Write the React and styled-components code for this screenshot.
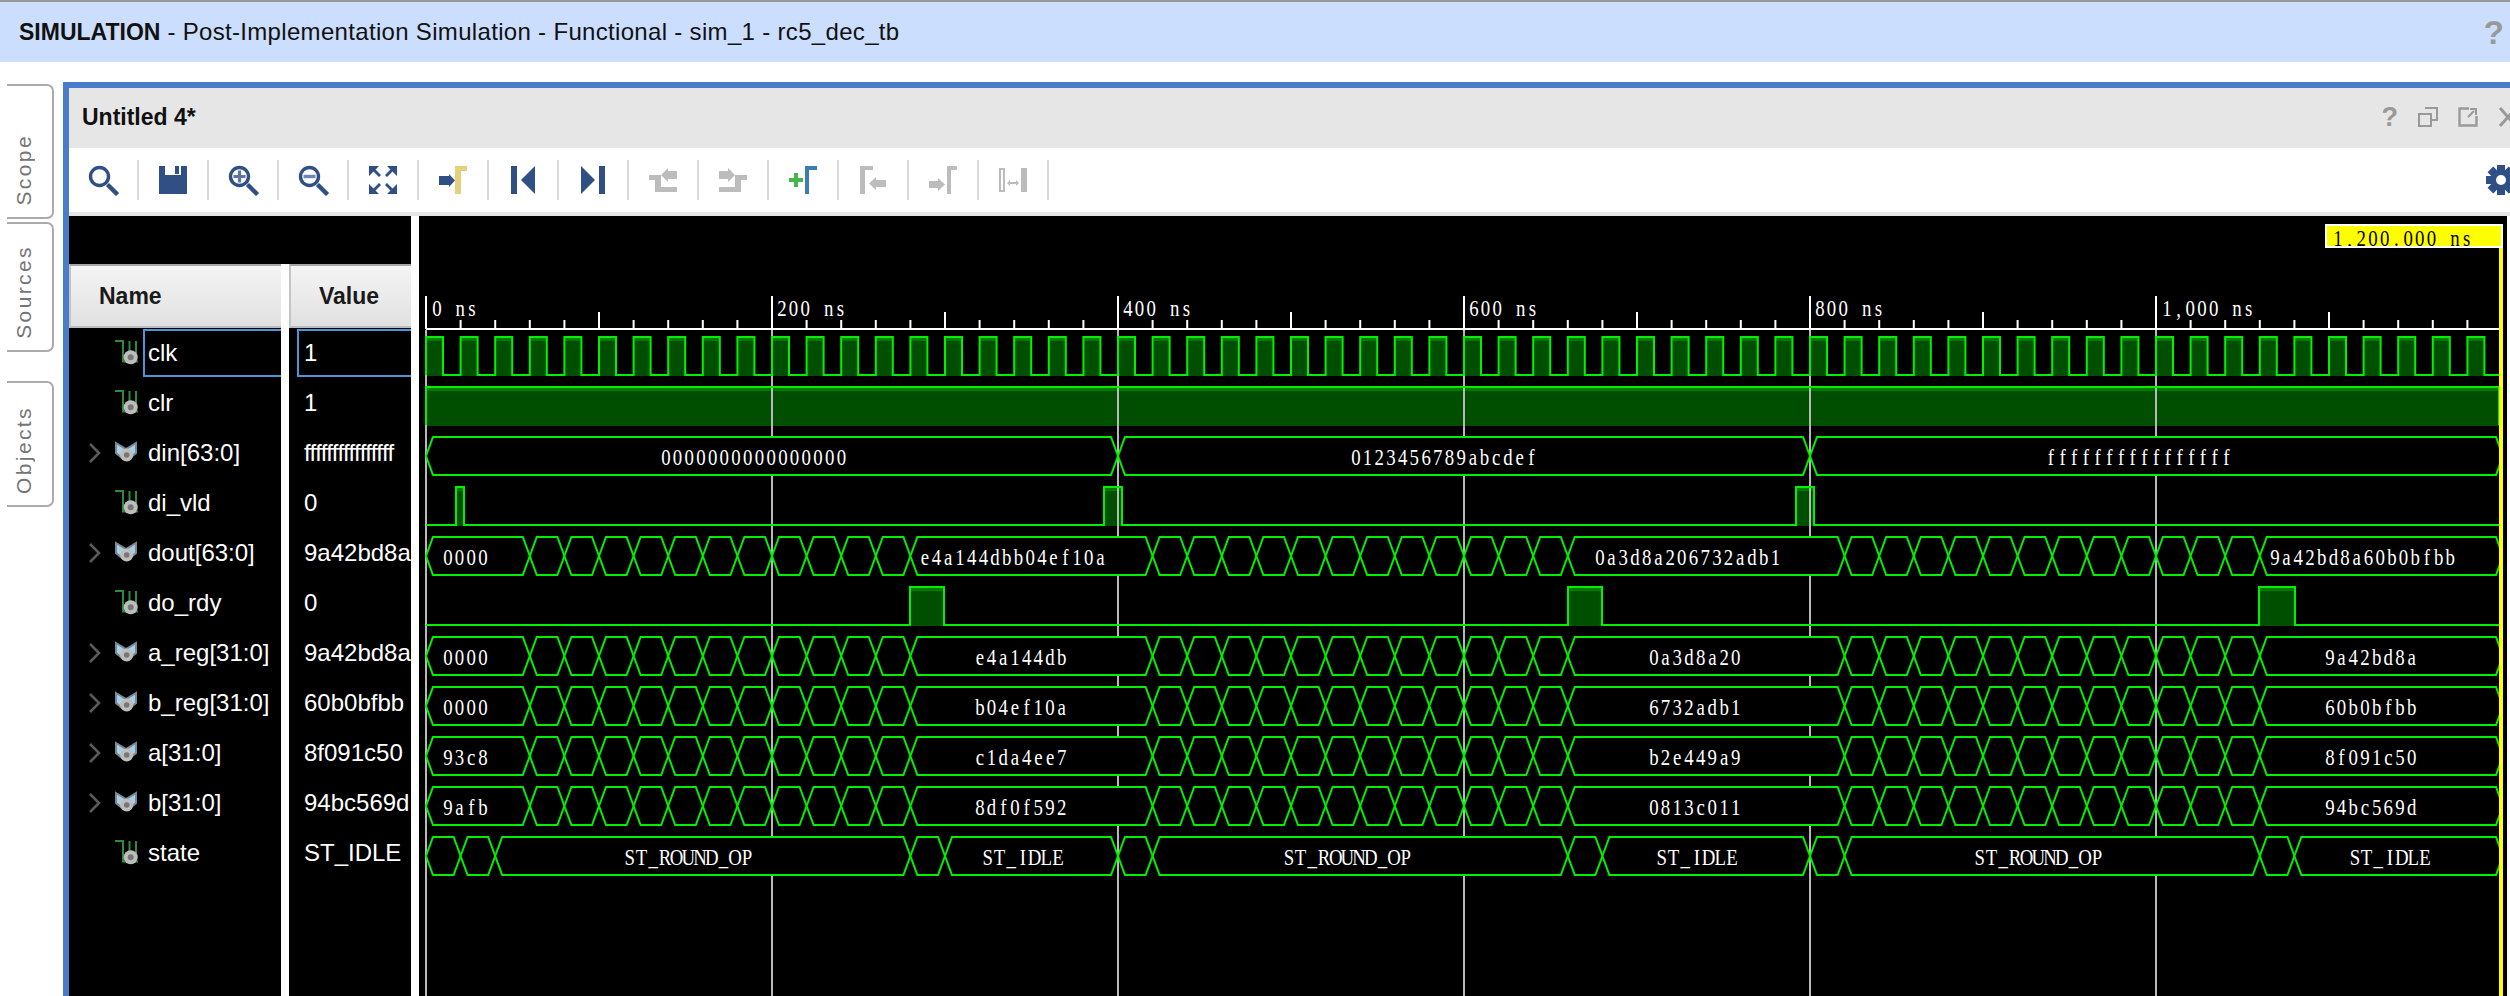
import React from "react";
import styled, { createGlobalStyle } from "styled-components";

const GlobalStyle = createGlobalStyle`
  html, body {
    margin: 0;
    padding: 0;
    height: 996px;
    overflow: hidden;
    background: #ffffff;
  }
  * { box-sizing: border-box; }
`;

const NAVY = "#2f4f85";
const OFF = "#bcbcbc";

// page coordinates of the wave canvas: 20ns = 34.6px, time zero at x=426
const X0 = 426;
const END = 2499;
const tx = (k) => X0 + 34.6 * k;
const ROW = (i) => ({ hi: 337 + 50 * i, lo: 375 + 50 * i });

const signals = [
  { name: "clk", value: "1", selected: true },
  { name: "clr", value: "1" },
  { name: "din[63:0]", value: "ffffffffffffffff", bus: true, tight: true },
  { name: "di_vld", value: "0" },
  { name: "dout[63:0]", value: "9a42bd8a", bus: true },
  { name: "do_rdy", value: "0" },
  { name: "a_reg[31:0]", value: "9a42bd8a", bus: true },
  { name: "b_reg[31:0]", value: "60b0bfbb", bus: true },
  { name: "a[31:0]", value: "8f091c50", bus: true },
  { name: "b[31:0]", value: "94bc569d", bus: true },
  { name: "state", value: "ST_IDLE" },
];

const clkPulses = Array.from({ length: 60 }, (_, k) => [tx(k), tx(k) + 17]);
const bitRows = [
  { row: 0, pulses: clkPulses },
  { row: 1, pulses: [[X0, END]] },
  { row: 3, pulses: [[456, 464], [1104, 1122], [1796, 1814]] },
  { row: 5, pulses: [[910, 944], [1568, 1602], [2259, 2295]] },
];

const range = (a, b) => Array.from({ length: b - a }, (_, i) => tx(a + i));
// edges of a register that churns between the three finished blocks
const churn = [
  X0, ...range(3, 15), ...range(21, 34), ...range(41, 54), 2503,
];
const regLabels = (t0, t1, t2, t3, first = 442) => [
  [t0, first], [t1, 974], [t2, 1648], [t3, 2324],
];

const busRows = [
  {
    row: 2,
    edges: [X0, tx(20), tx(40), 2503],
    labels: [["0000000000000000", 660], ["0123456789abcdef", 1350], ["ffffffffffffffff", 2045]],
  },
  {
    row: 4,
    edges: churn,
    labels: [["0000", 442], ["e4a144dbb04ef10a", 919], ["0a3d8a206732adb1", 1594], ["9a42bd8a60b0bfbb", 2269]],
  },
  { row: 6, edges: churn, labels: regLabels("0000", "e4a144db", "0a3d8a20", "9a42bd8a") },
  { row: 7, edges: churn, labels: regLabels("0000", "b04ef10a", "6732adb1", "60b0bfbb") },
  { row: 8, edges: churn, labels: regLabels("93c8", "c1da4ee7", "b2e449a9", "8f091c50") },
  { row: 9, edges: churn, labels: regLabels("9afb", "8df0f592", "0813c011", "94bc569d") },
  {
    row: 10,
    edges: [X0, tx(1), tx(2), tx(14), tx(15), tx(20), tx(21), tx(33), tx(34), tx(40), tx(41), tx(53), tx(54), 2503],
    labels: [
      ["ST_ROUND_OP", 624], ["ST_IDLE", 982], ["ST_ROUND_OP", 1283],
      ["ST_IDLE", 1656], ["ST_ROUND_OP", 1974], ["ST_IDLE", 2349],
    ],
  },
];

const rulerLabels = [
  ["0 ns", 431], ["200 ns", 776], ["400 ns", 1122], ["600 ns", 1468], ["800 ns", 1814], ["1,000 ns", 2161],
];

const Page = styled.div`
  width: 2510px;
  height: 996px;
  overflow: hidden;
  background: #ffffff;
  font-family: "Liberation Sans", Arial, sans-serif;
`;

const TopBar = styled.div`
  height: 62px;
  border-top: 2px solid #999999;
  background: #cbdefe;
  display: flex;
  align-items: center;
  justify-content: space-between;
  padding: 0 6px 0 19px;
  margin-bottom: 20px;
  color: #111111;
`;

const TopTitle = styled.span`
  font-size: 24px;
  letter-spacing: 0.32px;
  b {
    font-size: 23px;
    font-weight: 700;
    letter-spacing: 0;
  }
`;

const HelpGlyph = styled.span`
  color: #999999;
  font-weight: 700;
  font-size: ${(p) => p.$size}px;
  line-height: 1;
`;

const Main = styled.div`
  display: flex;
  height: 914px;
`;

const SideTabs = styled.div`
  width: 63px;
  flex: none;
  display: flex;
  flex-direction: column;
  padding: 2px 9px 0 7px;
`;

const SideTab = styled.div`
  height: ${(p) => p.$height}px;
  margin-top: ${(p) => p.$gap}px;
  border: 2px solid #ababab;
  border-left: none;
  border-radius: 0 7px 7px 0;
  display: flex;
  flex-direction: column;
  justify-content: flex-start;
  align-items: center;
  padding: 0 12px 0 0;
`;

const SideTabLabel = styled.span`
  writing-mode: vertical-rl;
  transform: rotate(180deg);
  font-size: 21px;
  letter-spacing: 2.4px;
  color: #757575;
  line-height: 21px;
  margin-top: auto;
  margin-bottom: 11px;
`;

const Panel = styled.div`
  flex: 1;
  min-width: 0;
  border-top: 6px solid #4a7cc9;
  border-left: 6px solid #4a7cc9;
  display: flex;
  flex-direction: column;
`;

const TitleBar = styled.div`
  height: 60px;
  flex: none;
  background: #e6e6e6;
  display: flex;
  align-items: center;
  justify-content: space-between;
  padding: 0 0 2px 13px;
  font-size: 23px;
  font-weight: 700;
  color: #111111;
`;

const TitleActions = styled.div`
  display: flex;
  align-items: center;
  gap: 20px;
  margin-right: -8px;
`;

const ActionIcon = styled.svg`
  width: 20px;
  height: 20px;
  flex: none;
  display: block;
`;

const Toolbar = styled.div`
  height: 68px;
  flex: none;
  background: #ffffff;
  border-bottom: 4px solid #e6e6e6;
  display: flex;
  align-items: center;
  position: relative;
`;

const ToolButton = styled.div`
  width: 70px;
  height: 40px;
  flex: none;
  border-right: 2px solid #d9d9d9;
  display: flex;
  align-items: center;
  justify-content: center;
`;

const ToolIcon = styled.svg`
  width: 40px;
  height: 32px;
  display: block;
`;

const GearIcon = styled.svg`
  width: 32px;
  height: 32px;
  flex: none;
  margin-left: auto;
  margin-right: -7px;
  display: block;
`;

const Body = styled.div`
  flex: 1;
  min-height: 0;
  display: flex;
  gap: 8px;
  padding-right: 3px;
`;

const SignalPane = styled.div`
  width: 342px;
  flex: none;
  display: grid;
  grid-template-columns: 212px 122px;
  grid-template-rows: 48px 64px 1fr;
  column-gap: 8px;
`;

const PaneTop = styled.div`
  grid-column: 1 / -1;
  background: #000000;
`;

const HeaderCell = styled.div`
  background: linear-gradient(#f4f4f4, #e1e1e1);
  border-top: 2px solid #a6a6a6;
  border-left: 2px solid #c4c4c4;
  border-bottom: 2px solid #bdbdbd;
  display: flex;
  align-items: center;
  padding-left: ${(p) => p.$inset}px;
  font-size: 23px;
  font-weight: 700;
  color: #1a1a1a;
`;

const SignalColumn = styled.div`
  background: #000000;
  overflow: hidden;
  min-width: 0;
`;

const NameRow = styled.div`
  height: 50px;
  display: flex;
  align-items: center;
  padding-left: 20px;
`;

const Expander = styled.svg`
  width: 12px;
  height: 20px;
  flex: none;
  margin-right: 13px;
  display: block;
  visibility: ${(p) => (p.$shown ? "visible" : "hidden")};
`;

const SignalIcon = styled.svg`
  width: 28px;
  height: 28px;
  flex: none;
  margin-right: 1px;
  display: block;
`;

const CellText = styled.div`
  flex: 1;
  height: 48px;
  min-width: 0;
  display: flex;
  align-items: center;
  padding-left: ${(p) => p.$inset}px;
  border: 2px solid ${(p) => (p.$selected ? "#4a96d8" : "transparent")};
  border-right: none;
  color: #ffffff;
  font-size: 24px;
  white-space: nowrap;
  overflow: hidden;
  letter-spacing: ${(p) => (p.$tight ? "-0.67px" : "0")};
`;

const ValueRow = styled.div`
  height: 50px;
  display: flex;
  align-items: center;
  padding-left: 8px;
`;

const WaveCanvas = styled.svg`
  flex: 1;
  min-width: 0;
  height: 100%;
  display: block;
  background: #000000;
`;

const Trace = styled.polyline`
  fill: none;
  stroke: #00f000;
  stroke-width: 2;
`;

const BusShape = styled.polygon`
  fill: #000000;
  stroke: #00f000;
  stroke-width: 2;
`;

const WaveText = styled.text`
  font-family: "Liberation Serif", "Times New Roman", serif;
  font-size: 23.5px;
  fill: ${(p) => p.$ink || "#ffffff"};
  text-anchor: middle;
`;

const ADV = 11.7;
const SQUEEZE = 0.8;

// the viewer draws its labels in a fixed cell, so every glyph gets its own slot
const CellLabel = ({ text, x, y, ink }) => (
  <WaveText
    $ink={ink}
    transform={`scale(${SQUEEZE} 1)`}
    x={[...text].map((_, i) => ((x + (i + 0.5) * ADV) / SQUEEZE).toFixed(1)).join(" ")}
    y={y}
  >
    {text}
  </WaveText>
);

const BitFill = ({ row, pulses }) => {
  const { hi, lo } = ROW(row);
  return pulses.map(([a, b]) => (
    <g key={a}>
      <rect x={a} y={hi} width={b - a} height={lo - hi + 1} fill="#004f00" />
      <rect x={a} y={hi} width={b - a} height={4} fill="#007a00" />
    </g>
  ));
};

const BitTrace = ({ row, pulses }) => {
  const { hi, lo } = ROW(row);
  const pts = [];
  pulses.forEach(([a, b]) => {
    pts.push(`${a},${lo}`, `${a},${hi}`, `${b},${hi}`, `${b},${lo}`);
  });
  pts.push(`${END},${lo}`);
  if (pulses[0][0] > X0) pts.unshift(`${X0},${lo}`);
  return <Trace points={pts.join(" ")} />;
};

const BusRow = ({ row, edges, labels }) => {
  const { hi, lo } = ROW(row);
  const mid = (hi + lo) / 2;
  const h = 7;
  return (
    <g>
      {edges.slice(0, -1).map((a, i) => {
        const b = edges[i + 1];
        return (
          <BusShape
            key={a}
            points={`${a},${mid} ${a + h},${hi} ${b - h},${hi} ${b},${mid} ${b - h},${lo} ${a + h},${lo}`}
          />
        );
      })}
      {labels.map(([text, x]) => (
        <CellLabel key={x} text={text} x={x} y={hi + 28} />
      ))}
    </g>
  );
};

const Ruler = () => (
  <g>
    {Array.from({ length: 60 }, (_, k) => {
      const top = k % 10 === 0 ? 296 : k % 5 === 0 ? 312 : 320;
      return <rect key={k} x={tx(k) - 1} y={top} width={2} height={329 - top} fill="#ffffff" />;
    })}
    <rect x={X0} y={328} width={END - X0} height={2} fill="#ffffff" />
    {rulerLabels.map(([text, x]) => (
      <CellLabel key={x} text={text} x={x} y={316} />
    ))}
  </g>
);

const GridLines = () =>
  [0, 1, 2, 3, 4, 5].map((i) => (
    <rect key={i} x={X0 + 346 * i - 1} y={330} width={2} height={666} fill="#b8b8b8" />
  ));

const Waveform = () => (
  <WaveCanvas viewBox="419 216 2088 780" preserveAspectRatio="none">
    <defs>
      <clipPath id="wave-clip">
        <rect x={419} y={216} width={END - 419} height={780} />
      </clipPath>
    </defs>
    <Ruler />
    {bitRows.map((r) => (
      <BitFill key={r.row} {...r} />
    ))}
    <GridLines />
    <g clipPath="url(#wave-clip)">
      {busRows.map((r) => (
        <BusRow key={r.row} {...r} />
      ))}
      {bitRows.map((r) => (
        <BitTrace key={r.row} {...r} />
      ))}
    </g>
    <rect x={2499} y={240} width={4} height={756} fill="#ffff00" />
    <rect x={2326} y={225} width={176} height={22} fill="#ffff00" stroke="#ffffff" strokeWidth={2} />
    <clipPath id="cursor-clip">
      <rect x={2327} y={226} width={174} height={20} />
    </clipPath>
    <g clipPath="url(#cursor-clip)">
      <CellLabel text="1,200.000 ns" x={2332} y={246} ink="#000000" />
    </g>
  </WaveCanvas>
);

const Lens = ({ children }) => (
  <>
    <circle cx="16.5" cy="12.5" r="9" fill="none" stroke={NAVY} strokeWidth="3.4" />
    <path d="M26 22l7 7" stroke={NAVY} strokeWidth="4.4" strokeLinecap="square" />
    {children}
  </>
);

const toolIcons = [
  <Lens />,
  <path fill={NAVY} fillRule="evenodd" d="M6 2h6v9h16V2h6v28H6zM22 2h4v8h-4z" />,
  <Lens>
    <path d="M10.5 12.5h12M16.5 6.5v12" stroke="#5a76a8" strokeWidth="3.2" />
  </Lens>,
  <Lens>
    <path d="M10.5 12.5h12" stroke="#6c85b2" strokeWidth="3.4" />
  </Lens>,
  <g fill={NAVY}>
    <path d="M6 2h10l-3.5 3.5L18 11l-2 2-5.500-5.500L6 12z" />
    <path d="M34 2H24l3.500 3.500L22 11l2 2 5.500-5.500L34 12z" />
    <path d="M6 30h10l-3.500-3.500L18 21l-2-2-5.500 5.500L6 20z" />
    <path d="M34 30H24l3.500-3.500L22 21l2-2 5.500 5.500L34 20z" />
  </g>,
  <>
    <path fill={NAVY} d="M6 12h10V10l6 6.500-6 6.500v-2H6z" />
    <path fill="#e5d07a" d="M22 2h12v5h-6v23h-6z" />
  </>,
  <>
    <rect x="8" y="2" width="6" height="28" fill={NAVY} />
    <path fill={NAVY} d="M18 16L32 2v28z" />
  </>,
  <>
    <path fill={NAVY} d="M8 2l14 14L8 30z" />
    <rect x="26" y="2" width="6" height="28" fill={NAVY} />
  </>,
  <g fill={OFF}>
    <path d="M18 11l7-7v3h9v8h-9v3z" />
    <path d="M6 11h12v12h16v5H12V16H6z" />
  </g>,
  <g fill={OFF}>
    <path d="M22 11l-7-7v3H6v8h9v3z" />
    <path d="M34 11H22v12H6v5h22V16h6z" />
  </g>,
  <>
    <path fill="#45b649" d="M11 9h4v5h5v4h-5v5h-4v-5H6v-4h5z" />
    <path fill="#3a7fb0" d="M22 2h12v4h-8v24h-4z" />
  </>,
  <g fill={OFF}>
    <path d="M7 2h13v4h-8v24H7z" />
    <path d="M16 19.500l7-6.500v3h10v7H23v3z" />
  </g>,
  <g fill={OFF}>
    <path d="M22 20.500l-7-6.500v3H6v7h9v3z" />
    <path d="M24 2h10v4h-6v24h-4z" />
  </g>,
  <g fill={OFF}>
    <path fillRule="evenodd" d="M6 4h6v24H6zM8 6v20h2V6z" />
    <rect x="28" y="4" width="6" height="24" />
    <path d="M14 19l3-3v2h6v-2l3 3-3 3v-2h-6v2z" />
  </g>,
];

const LogicGlyph = () => (
  <SignalIcon viewBox="0 0 28 28">
    <path d="M1 2h8v20.500h15M15.500 2v14M22 2v14" fill="none" stroke="#2e8b3a" strokeWidth="2" />
    <circle cx="16.700" cy="18.300" r="7" fill="#bdbdbd" />
    <circle cx="16.700" cy="18.300" r="3" fill="#777777" />
  </SignalIcon>
);

const BusGlyph = () => (
  <SignalIcon viewBox="0 0 28 28">
    <path d="M2 4l10 6 10-6v10l-6 5H8l-6-5z" fill="#a6d0e8" stroke="#7c8894" strokeWidth="2" />
    <circle cx="12.700" cy="16" r="6.500" fill="#bdbdbd" />
    <circle cx="12.700" cy="16" r="2.800" fill="#777777" />
  </SignalIcon>
);

const ChevronGlyph = ({ shown }) => (
  <Expander viewBox="0 0 12 20" $shown={shown}>
    <path d="M1 1l9 9-9 9" fill="none" stroke="#5a5a5a" strokeWidth="2.600" />
  </Expander>
);

const Gear = () => (
  <GearIcon viewBox="0 0 32 32">
    <g fill={NAVY}>
      {[0, 45, 90, 135].map((a) => (
        <rect key={a} x="12" y="1" width="8" height="30" transform={`rotate(${a} 16 16)`} />
      ))}
    </g>
    <circle cx="16" cy="16" r="10.500" fill={NAVY} />
    <circle cx="16" cy="16" r="5" fill="#ffffff" />
  </GearIcon>
);

const App = () => (
  <Page>
    <GlobalStyle />
    <TopBar>
      <TopTitle>
        <b>SIMULATION</b> - Post-Implementation Simulation - Functional - sim_1 - rc5_dec_tb
      </TopTitle>
      <HelpGlyph $size={33}>?</HelpGlyph>
    </TopBar>
    <Main>
      <SideTabs>
        <SideTab $height={135} $gap={0}><SideTabLabel>Scope</SideTabLabel></SideTab>
        <SideTab $height={130} $gap={3}><SideTabLabel>Sources</SideTabLabel></SideTab>
        <SideTab $height={126} $gap={29}><SideTabLabel>Objects</SideTabLabel></SideTab>
      </SideTabs>
      <Panel>
        <TitleBar>
          <span>Untitled 4*</span>
          <TitleActions>
            <HelpGlyph $size={27}>?</HelpGlyph>
            <ActionIcon viewBox="0 0 20 20">
              <path d="M7 1h12v12h-5M1 7h12v12H1z" fill="none" stroke="#999999" strokeWidth="2" />
            </ActionIcon>
            <ActionIcon viewBox="0 0 20 20">
              <path d="M11 1.500H1.500v17h17V9" fill="none" stroke="#999999" strokeWidth="2.400" />
              <path d="M10 10l6-6M12 2h6v6" fill="none" stroke="#999999" strokeWidth="2" />
            </ActionIcon>
            <ActionIcon viewBox="0 0 20 20">
              <path d="M2 1l16 18M18 1L2 19" fill="none" stroke="#999999" strokeWidth="3" />
            </ActionIcon>
          </TitleActions>
        </TitleBar>
        <Toolbar>
          {toolIcons.map((icon, i) => (
            <ToolButton key={i}>
              <ToolIcon viewBox="0 0 40 32">{icon}</ToolIcon>
            </ToolButton>
          ))}
          <Gear />
        </Toolbar>
        <Body>
          <SignalPane>
            <PaneTop />
            <HeaderCell $inset={28}>Name</HeaderCell>
            <HeaderCell $inset={28}>Value</HeaderCell>
            <SignalColumn>
              {signals.map((s) => (
                <NameRow key={s.name}>
                  <ChevronGlyph shown={s.bus} />
                  {s.bus ? <BusGlyph /> : <LogicGlyph />}
                  <CellText $inset={3} $selected={s.selected}>{s.name}</CellText>
                </NameRow>
              ))}
            </SignalColumn>
            <SignalColumn>
              {signals.map((s) => (
                <ValueRow key={s.name}>
                  <CellText $inset={5} $selected={s.selected} $tight={s.tight}>{s.value}</CellText>
                </ValueRow>
              ))}
            </SignalColumn>
          </SignalPane>
          <Waveform />
        </Body>
      </Panel>
    </Main>
  </Page>
);

export default App;
